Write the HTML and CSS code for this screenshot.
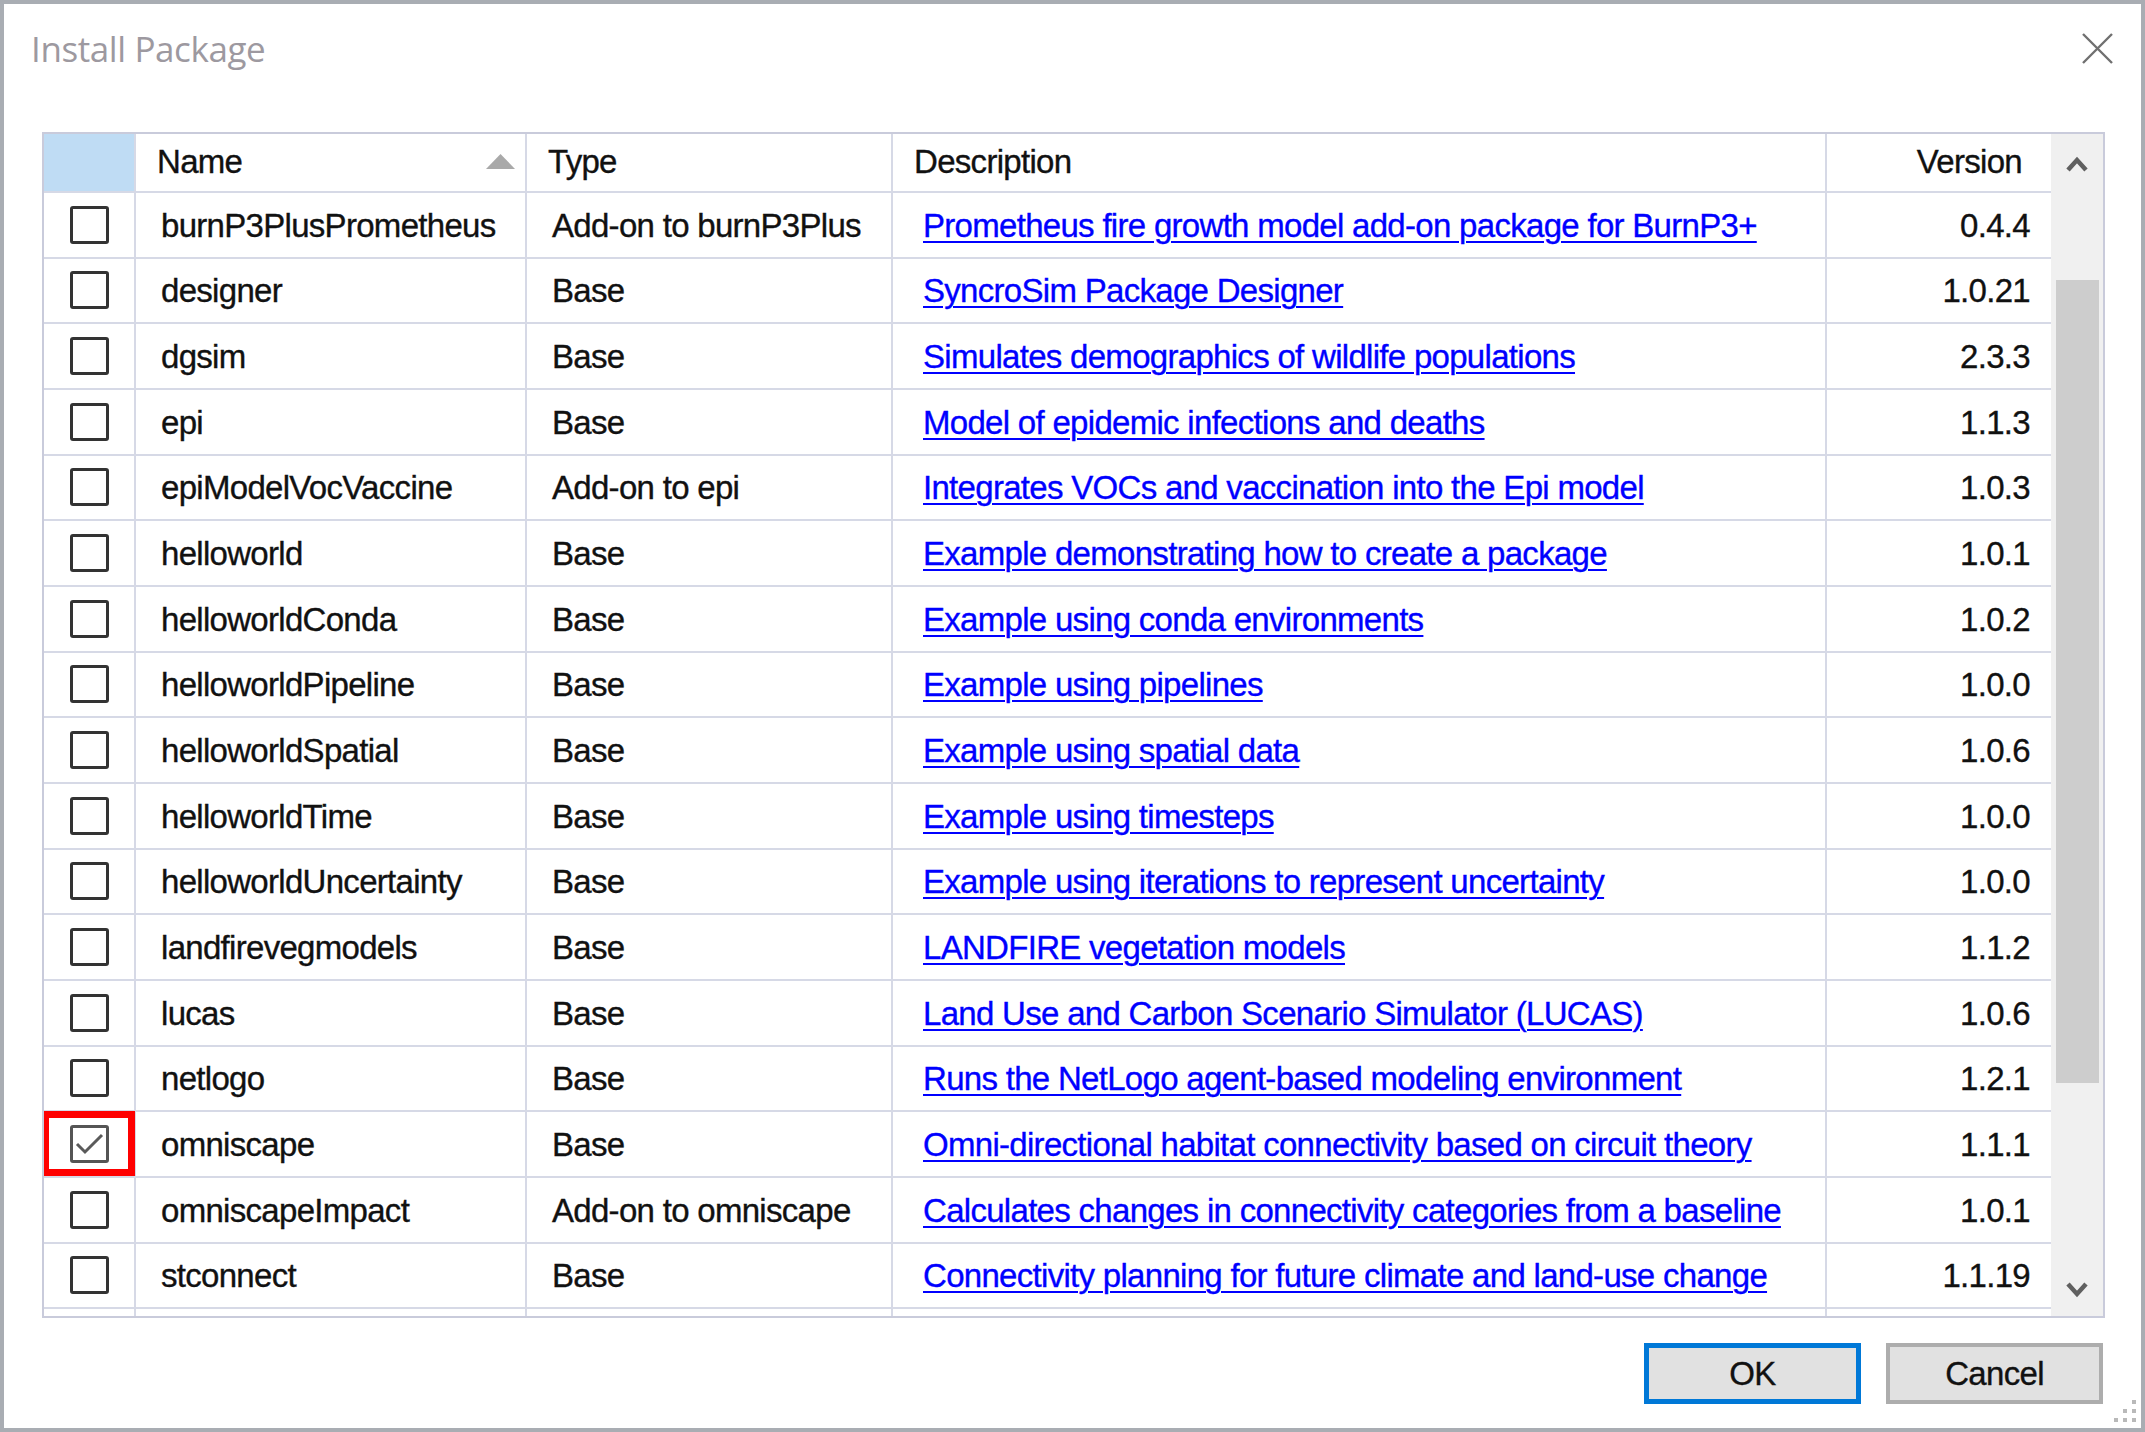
FILE: index.html
```html
<!DOCTYPE html>
<html lang="en">
<head>
<meta charset="utf-8">
<title>Install Package</title>
<link rel="stylesheet" href="styles.css">
</head>
<body>
<div class="window">
  <div class="titlebar">
    <div class="title">Install Package</div>
    <svg class="close" width="31" height="31" viewBox="0 0 31 31"><path d="M1 1 L30 30 M30 1 L1 30" stroke="#707070" stroke-width="2.4" fill="none"/></svg>
  </div>

  <div class="grid">
    <div class="table">
      <div class="head">
        <div class="hcell corner"></div>
        <div class="hcell">Name<svg class="sort" width="29" height="15" viewBox="0 0 29 15"><polygon points="0,15 14.5,0 29,15" fill="#a9a9a9"/></svg></div>
        <div class="hcell">Type</div>
        <div class="hcell">Description</div>
        <div class="hcell hver">Version</div>
      </div>
      <div class="body">
        <div class="cell chk"><span class="box"></span></div><div class="cell">burnP3PlusPrometheus</div><div class="cell">Add-on to burnP3Plus</div><div class="cell desc"><a href="#">Prometheus fire growth model add-on package for BurnP3+</a></div><div class="cell ver">0.4.4</div>
        <div class="cell chk"><span class="box"></span></div><div class="cell">designer</div><div class="cell">Base</div><div class="cell desc"><a href="#">SyncroSim Package Designer</a></div><div class="cell ver">1.0.21</div>
        <div class="cell chk"><span class="box"></span></div><div class="cell">dgsim</div><div class="cell">Base</div><div class="cell desc"><a href="#">Simulates demographics of wildlife populations</a></div><div class="cell ver">2.3.3</div>
        <div class="cell chk"><span class="box"></span></div><div class="cell">epi</div><div class="cell">Base</div><div class="cell desc"><a href="#">Model of epidemic infections and deaths</a></div><div class="cell ver">1.1.3</div>
        <div class="cell chk"><span class="box"></span></div><div class="cell">epiModelVocVaccine</div><div class="cell">Add-on to epi</div><div class="cell desc"><a href="#">Integrates VOCs and vaccination into the Epi model</a></div><div class="cell ver">1.0.3</div>
        <div class="cell chk"><span class="box"></span></div><div class="cell">helloworld</div><div class="cell">Base</div><div class="cell desc"><a href="#">Example demonstrating how to create a package</a></div><div class="cell ver">1.0.1</div>
        <div class="cell chk"><span class="box"></span></div><div class="cell">helloworldConda</div><div class="cell">Base</div><div class="cell desc"><a href="#">Example using conda environments</a></div><div class="cell ver">1.0.2</div>
        <div class="cell chk"><span class="box"></span></div><div class="cell">helloworldPipeline</div><div class="cell">Base</div><div class="cell desc"><a href="#">Example using pipelines</a></div><div class="cell ver">1.0.0</div>
        <div class="cell chk"><span class="box"></span></div><div class="cell">helloworldSpatial</div><div class="cell">Base</div><div class="cell desc"><a href="#">Example using spatial data</a></div><div class="cell ver">1.0.6</div>
        <div class="cell chk"><span class="box"></span></div><div class="cell">helloworldTime</div><div class="cell">Base</div><div class="cell desc"><a href="#">Example using timesteps</a></div><div class="cell ver">1.0.0</div>
        <div class="cell chk"><span class="box"></span></div><div class="cell">helloworldUncertainty</div><div class="cell">Base</div><div class="cell desc"><a href="#">Example using iterations to represent uncertainty</a></div><div class="cell ver">1.0.0</div>
        <div class="cell chk"><span class="box"></span></div><div class="cell">landfirevegmodels</div><div class="cell">Base</div><div class="cell desc"><a href="#">LANDFIRE vegetation models</a></div><div class="cell ver">1.1.2</div>
        <div class="cell chk"><span class="box"></span></div><div class="cell">lucas</div><div class="cell">Base</div><div class="cell desc"><a href="#">Land Use and Carbon Scenario Simulator (LUCAS)</a></div><div class="cell ver">1.0.6</div>
        <div class="cell chk"><span class="box"></span></div><div class="cell">netlogo</div><div class="cell">Base</div><div class="cell desc"><a href="#">Runs the NetLogo agent-based modeling environment</a></div><div class="cell ver">1.2.1</div>
        <div class="cell chk"><span class="box checked"><svg width="33" height="32" viewBox="0 0 33 32"><polyline points="4,16 12,24 29,7" fill="none" stroke="#5a5a5a" stroke-width="3"/></svg></span><span class="highlight"></span></div><div class="cell">omniscape</div><div class="cell">Base</div><div class="cell desc"><a href="#">Omni-directional habitat connectivity based on circuit theory</a></div><div class="cell ver">1.1.1</div>
        <div class="cell chk"><span class="box"></span></div><div class="cell">omniscapeImpact</div><div class="cell">Add-on to omniscape</div><div class="cell desc"><a href="#">Calculates changes in connectivity categories from a baseline</a></div><div class="cell ver">1.0.1</div>
        <div class="cell chk"><span class="box"></span></div><div class="cell">stconnect</div><div class="cell">Base</div><div class="cell desc"><a href="#">Connectivity planning for future climate and land-use change</a></div><div class="cell ver">1.1.19</div>
        <div class="cell chk"></div><div class="cell"></div><div class="cell"></div><div class="cell desc"></div><div class="cell ver"></div>
      </div>
    </div>
    <div class="vscroll">
      <div class="arrow up"><svg width="22" height="18" viewBox="0 0 22 18"><polyline points="2,15 11,5 20,15" fill="none" stroke="#606060" stroke-width="4.5"/></svg></div>
      <div class="track"><div class="thumb"></div></div>
      <div class="arrow down"><svg width="22" height="18" viewBox="0 0 22 18"><polyline points="2,3 11,13 20,3" fill="none" stroke="#606060" stroke-width="4.5"/></svg></div>
    </div>
  </div>

  <div class="footer">
    <button class="btn default">OK</button>
    <button class="btn">Cancel</button>
  </div>

  <svg class="grip" width="26" height="26" viewBox="0 0 26 26">
    <rect x="21" y="2" width="4" height="4" fill="#b9b9b9"/>
    <rect x="12" y="11" width="4" height="4" fill="#b9b9b9"/>
    <rect x="21" y="11" width="4" height="4" fill="#b9b9b9"/>
    <rect x="3" y="20" width="4" height="4" fill="#b9b9b9"/>
    <rect x="12" y="20" width="4" height="4" fill="#b9b9b9"/>
    <rect x="21" y="20" width="4" height="4" fill="#b9b9b9"/>
  </svg>
</div>
</body>
</html>
```

FILE: styles.css
```css
html, body {
  margin: 0;
  padding: 0;
  background: #ffffff;
}

.window {
  --cols: 92px 391px 366px 934px 224px;
  --line: #d6d9e6;
  position: relative;
  width: 2145px;
  height: 1432px;
  box-sizing: border-box;
  border: 4px solid #a9adb3;
  background: #ffffff;
  display: flex;
  flex-direction: column;
  font-family: "Liberation Sans", Arial, sans-serif;
  font-size: 33px;
  letter-spacing: -0.7px;
  color: #111111;
  -webkit-text-stroke: 0.35px currentColor;
}

.titlebar {
  height: 128px;
  flex: none;
  box-sizing: border-box;
  display: flex;
  align-items: flex-start;
  padding: 0 28px 0 27px;
}

.title {
  font-family: "Open Sans", "Noto Sans", sans-serif;
  font-size: 35px;
  line-height: 48px;
  letter-spacing: -0.4px;
  margin-top: 21px;
  color: #9d99a0;
  -webkit-text-stroke: 0;
}

.close {
  margin-left: auto;
  margin-top: 29px;
}

.grid {
  flex: none;
  height: 1186px;
  margin: 0 36px 0 38px;
  box-sizing: border-box;
  border: 2px solid #c9cbdb;
  display: flex;
}

.table {
  width: 2007px;
  display: flex;
  flex-direction: column;
}

.head {
  display: grid;
  grid-template-columns: var(--cols);
  height: 59px;
  flex: none;
}

.hcell {
  box-sizing: border-box;
  border-right: 2px solid var(--line);
  border-bottom: 2px solid var(--line);
  display: flex;
  align-items: center;
  padding-left: 21px;
  padding-bottom: 2px;
  white-space: nowrap;
}

.hcell.corner {
  background: #bfdcf4;
  padding: 0;
}

.sort {
  margin-left: auto;
  margin-right: 10px;
}

.hcell.hver {
  justify-content: flex-end;
  padding-right: 29px;
  border-right: none;
}

.body {
  flex: 1;
  overflow: hidden;
  display: grid;
  grid-template-columns: var(--cols);
  grid-auto-rows: 65.66px;
  align-content: start;
}

.cell {
  box-sizing: border-box;
  border-right: 2px solid var(--line);
  border-bottom: 2px solid var(--line);
  display: flex;
  align-items: center;
  padding-left: 25px;
  padding-top: 2px;
  white-space: nowrap;
  overflow: hidden;
}

.cell.desc {
  padding-left: 30px;
}

.cell.desc a {
  color: #0000ff;
  text-decoration: underline;
  text-decoration-thickness: 2px;
  text-underline-offset: 4px;
}

.cell.ver {
  justify-content: flex-end;
  padding-right: 21px;
  border-right: none;
}

.cell.chk {
  padding: 0;
  justify-content: center;
  position: relative;
  overflow: visible;
}

.box {
  width: 39px;
  height: 38px;
  box-sizing: border-box;
  border: 3px solid #333333;
  border-radius: 3px;
  display: block;
}

.box.checked {
  border-color: #555555;
  position: relative;
}

.box.checked svg {
  position: absolute;
  left: 0;
  top: 0;
}

.highlight {
  position: absolute;
  left: -2px;
  top: -1px;
  width: 93px;
  height: 65px;
  box-sizing: border-box;
  border: 7px solid #ff0000;
}

.vscroll {
  width: 52px;
  background: #f0f0f0;
  display: flex;
  flex-direction: column;
}

.arrow {
  display: flex;
  align-items: center;
  justify-content: center;
  flex: none;
}

.arrow.up {
  height: 60px;
}

.arrow.down {
  height: 52px;
}

.track {
  flex: 1;
  padding-top: 86px;
}

.thumb {
  height: 803px;
  margin: 0 4px 0 5px;
  background: #cdcdcd;
}

.footer {
  display: flex;
  justify-content: flex-end;
  gap: 25px;
  padding: 25px 38px 0 0;
}

.btn {
  width: 217px;
  height: 61px;
  box-sizing: border-box;
  background: #e1e1e1;
  border: 4px solid #adadad;
  font-family: "Liberation Sans", Arial, sans-serif;
  font-size: 33px;
  letter-spacing: -0.7px;
  color: #111111;
  -webkit-text-stroke: 0.35px currentColor;
  padding: 0;
}

.btn.default {
  border: 5px solid #0078d7;
}

.grip {
  position: absolute;
  right: 4px;
  bottom: 4px;
}
```
